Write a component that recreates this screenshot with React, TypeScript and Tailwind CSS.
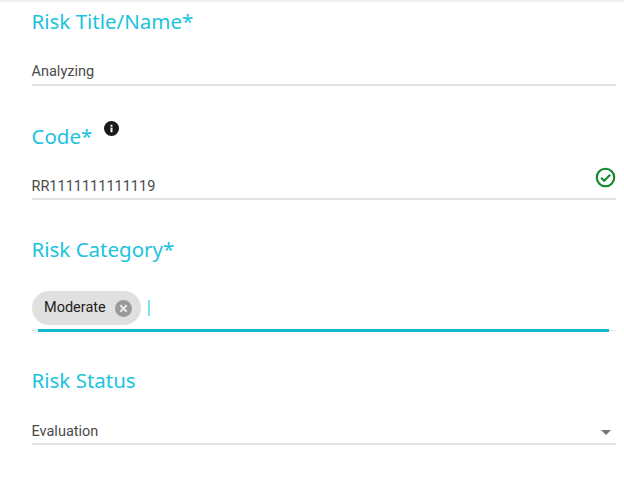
export default function App() {
  const label = "h-[28px] text-[20.5px] leading-[28px] ml-[-0.5px] text-[#1cc3dc] font-['Noto_Sans',sans-serif]";
  const value = "text-[14.5px] leading-[20px] ml-[-0.5px] text-[#4a4a4a] font-['Roboto',sans-serif]";
  return (
    <div className="w-[624px] h-[483px] bg-white overflow-hidden border-t-2 border-[#f0f0f0] pl-[32px] pr-[8px] flex flex-col">
      <div className="pt-[5px] flex flex-col">
        <div className={label}>Risk Title/Name*</div>
        <div className={`${value} mt-[27px] pb-[2px] border-b-2 border-[#e2e2e2]`}>Analyzing</div>
      </div>
      <div className="pt-[36px] flex flex-col">
        <div className="flex items-start gap-[12px]">
          <div className={label}>Code*</div>
          <svg viewBox="0 0 24 24" className="w-[15px] h-[15px] mt-[-1px]">
            <circle cx="12" cy="12" r="12" fill="#1a1a1a" />
            <rect x="10.4" y="10.5" width="3.2" height="7.5" fill="#fff" />
            <rect x="10.4" y="6" width="3.2" height="3" fill="#fff" />
          </svg>
        </div>
        <div className="mt-[27px] pb-[1px] border-b-2 border-[#e2e2e2] flex justify-between">
          <div className={value}>RR1111111111119</div>
          <svg viewBox="0 0 24 24" className="w-[21px] h-[21px] mt-[-10px] mb-[-1px]" fill="none" stroke="#128a2c" strokeWidth="2.4">
            <circle cx="12" cy="12" r="10" />
            <path d="M7 12.2l3.5 3.5 6.8-6.8" />
          </svg>
        </div>
      </div>
      <div className="pt-[35px] flex flex-col">
        <div className={label}>Risk Category*</div>
        <div className="mt-[28px] border-b border-[#e2e2e2] flex flex-col">
          <div className="flex items-start h-[39px]">
            <div className="h-[34px] rounded-full bg-[#e0e0e0] pl-[12px] pr-[9px] flex items-center gap-[9px]">
              <span className="text-[14.5px] text-[#222222] font-['Roboto',sans-serif]">Moderate</span>
              <svg viewBox="0 0 16 16" className="w-[17px] h-[17px]">
                <circle cx="8" cy="8" r="8" fill="#999999" />
                <path d="M5 5l6 6M11 5l-6 6" stroke="#e6e6e6" strokeWidth="2" />
              </svg>
            </div>
            <div className="w-[2px] h-[16px] bg-[#7fdde9] ml-[7px] mt-[9px]" />
          </div>
        </div>
        <div className="h-[3px] mt-[-2px] ml-[6px] mr-[7px] bg-[#10bad2]" />
      </div>
      <div className="pt-[34px] flex flex-col">
        <div className={label}>Risk Status</div>
        <div className="mt-[28px] pb-[1px] border-b-2 border-[#e2e2e2] flex justify-between items-center">
          <div className={value}>Evaluation</div>
          <div className="w-0 h-0 border-l-[5px] border-r-[5px] border-t-[5px] border-l-transparent border-r-transparent border-t-[#757575] mr-[5px]" />
        </div>
      </div>
    </div>
  );
}
